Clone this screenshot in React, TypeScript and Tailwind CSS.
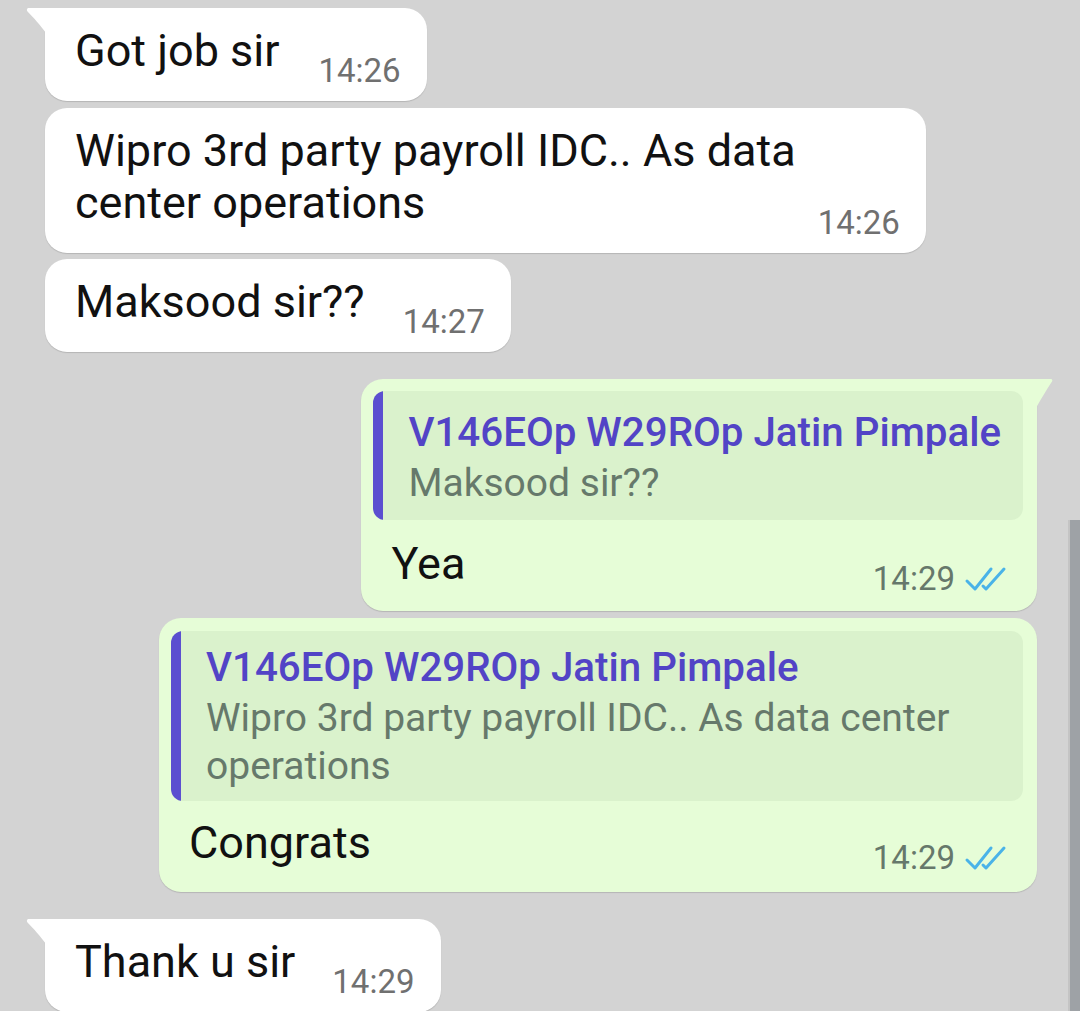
import React from "react";

const Ticks = () => (
  <svg width="46" height="26" viewBox="0 0 46 26" fill="none" stroke="#4ab3e8" strokeWidth="3" strokeLinecap="round" strokeLinejoin="round">
    <path d="M3 15 L11 23 L27 3" />
    <path d="M19 20 L22 23 L40 3" />
  </svg>
);

const InTail = () => (
  <svg className="absolute -left-[19px] top-0" width="20" height="26" viewBox="0 0 20 26">
    <path d="M2 0 L20 0 L20 25 C15 18 7 9 1.5 3.5 Q0 1.5 2 0 Z" fill="#ffffff" />
  </svg>
);

const OutTail = () => (
  <svg className="absolute -right-[16px] top-0" width="17" height="30" viewBox="0 0 17 30">
    <path d="M0 0 L15 0 Q17 0.5 16 2.5 C11 10 5 20 0 29 Z" fill="#e6fdd7" />
  </svg>
);

function Incoming({
  lines,
  time,
  tail,
  gap,
  className,
}: {
  lines: string[];
  time: string;
  tail?: boolean;
  gap: string;
  className: string;
}) {
  return (
    <div
      className={
        "relative self-start ml-[45px] bg-white rounded-[22px] shadow-[0_1px_1px_rgba(0,0,0,0.14)] " +
        (tail ? "rounded-tl-none " : "") +
        className
      }
    >
      {tail && <InTail />}
      <div className="flex items-end pl-[30px] pr-[26px] pt-[17px] pb-[10px]">
        <div className="pb-[14px] text-[45px] leading-[52px] text-[#111111] whitespace-nowrap">
          {lines.map((l, i) => (
            <div key={i}>{l}</div>
          ))}
        </div>
        <div className={"text-[33px] leading-[40px] text-[#707070] whitespace-nowrap " + gap}>{time}</div>
      </div>
    </div>
  );
}

function Quote({ lines, pt, pb }: { lines: string[]; pt: string; pb: string }) {
  return (
    <div className="flex rounded-[12px] bg-[#daf2cc] overflow-hidden">
      <div className="w-[10px] shrink-0 bg-[#5b4fd0]" />
      <div className={"flex-1 pl-[25px] pr-[22px] " + pt + " " + pb}>
        <div className="text-[40.3px] leading-[52px] font-medium text-[#5244c6] whitespace-nowrap">
          V146EOp W29ROp Jatin Pimpale
        </div>
        <div className="text-[39px] leading-[48px] text-[#66796b] whitespace-nowrap">
          {lines.map((l, i) => (
            <div key={i}>{l}</div>
          ))}
        </div>
      </div>
    </div>
  );
}

function Outgoing({
  quote,
  text,
  tail,
  className,
  pt,
  pb,
  qpt,
  qpb,
  mt,
}: {
  quote: string[];
  text: string;
  tail?: boolean;
  className: string;
  pt: string;
  pb: string;
  qpt: string;
  qpb: string;
  mt: string;
}) {
  return (
    <div
      className={
        "relative self-end mr-[43px] bg-[#e6fdd7] rounded-[22px] shadow-[0_1px_1px_rgba(0,0,0,0.14)] pl-[12px] pr-[14px] " +
        (tail ? "rounded-tr-none " : "") +
        pt +
        " " +
        pb +
        " " +
        className
      }
    >
      {tail && <OutTail />}
      <Quote lines={quote} pt={qpt} pb={qpb} />
      <div className={"flex items-end justify-between pl-[18px] " + mt}>
        <div className="pb-[9px] text-[45px] leading-[52px] text-[#111111]">{text}</div>
        <div className="flex items-center gap-[9px] pr-[13px]">
          <span className="text-[33px] leading-[40px] text-[#66786b]">14:29</span>
          <Ticks />
        </div>
      </div>
    </div>
  );
}

export default function App() {
  return (
    <div className="relative w-[1080px] h-[1011px] overflow-hidden bg-[#d3d3d3] font-['Roboto','Liberation_Sans',sans-serif]">
      <div className="flex flex-col pt-[8px]">
        <Incoming lines={["Got job sir"]} time="14:26" tail gap="ml-[39px]" className="" />
        <Incoming
          lines={["Wipro 3rd party payroll IDC.. As data", "center operations"]}
          time="14:26"
          gap="ml-[22px]"
          className="mt-[7px]"
        />
        <Incoming lines={["Maksood sir??"]} time="14:27" gap="ml-[38px]" className="mt-[6px]" />
        <Outgoing
          quote={["Maksood sir??"]}
          text="Yea"
          tail
          className="mt-[27px]"
          pt="pt-[12px]"
          pb="pb-[12px]"
          qpt="pt-[16px]"
          qpb="pb-[13px]"
          mt="mt-[18px]"
        />
        <Outgoing
          quote={["Wipro 3rd party payroll IDC.. As data center", "operations"]}
          text="Congrats"
          className="mt-[7px] w-[878px]"
          pt="pt-[13px]"
          pb="pb-[14px]"
          qpt="pt-[11px]"
          qpb="pb-[11px]"
          mt="mt-[16px]"
        />
        <Incoming lines={["Thank u sir"]} time="14:29" tail gap="ml-[37px]" className="mt-[27px]" />
      </div>
      <div className="absolute right-0 top-[520px] bottom-0 w-[12px] bg-[#9ea2a6] border-l-2 border-[#c4c4c4]" />
    </div>
  );
}
